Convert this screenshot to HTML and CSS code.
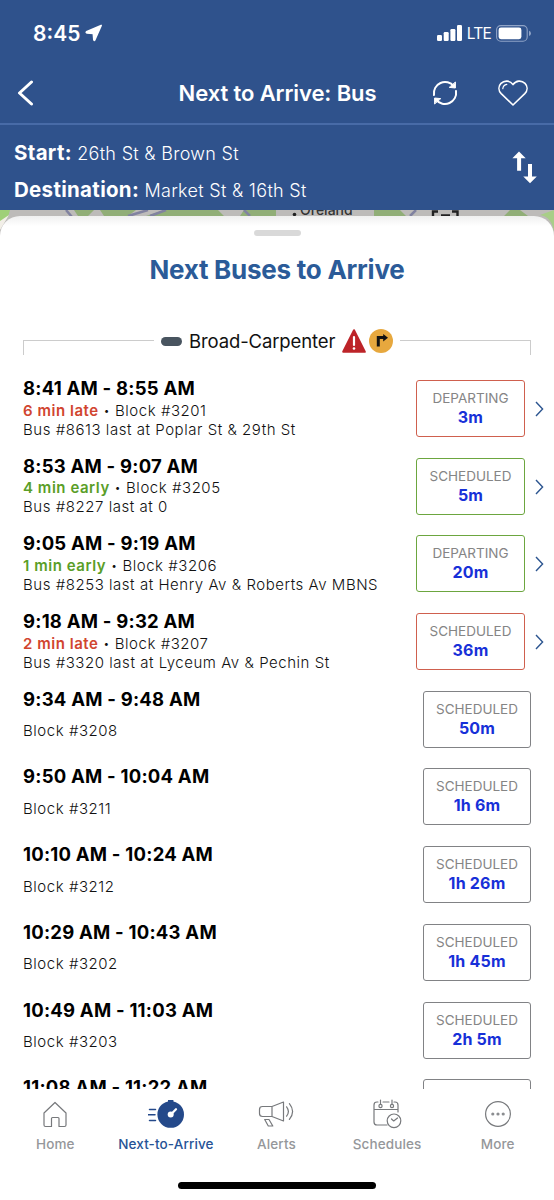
FILE: index.html
```
<!DOCTYPE html>
<html lang="en">
<head>
  <meta charset="UTF-8">
  <meta name="viewport" content="width=device-width, initial-scale=1.0">
  <title>Next to Arrive: Bus</title>
  <link rel="stylesheet" href="styles.css">
</head>
<body>
  <header class="header">
    <div class="status_bar">
      <div class="clock">
        <span>8:45</span>
        <svg width="18" height="18" viewBox="0 0 18 18"><path d="M16.2 1.4 L1.5 7.8 Q.8 8.4 1.7 8.9 L8.3 9.4 L8.8 15.8 Q9.2 16.8 9.8 16 Z" fill="#fff" stroke="#fff" stroke-width="1.6" stroke-linejoin="round"/></svg>
      </div>
      <div class="signal">
        <svg width="25" height="16" viewBox="0 0 25 16" fill="#fff"><rect x="0" y="10" width="5" height="6" rx="1.2"/><rect x="6.7" y="7" width="5" height="9" rx="1.2"/><rect x="13.4" y="4" width="5" height="12" rx="1.2"/><rect x="20" y="0" width="5" height="16" rx="1.2"/></svg>
        <span class="lte">LTE</span>
        <svg width="35" height="17" viewBox="0 0 35 17"><rect x=".6" y=".6" width="30.6" height="15.6" rx="4.2" fill="none" stroke="#8fa3c6" stroke-width="1.1"/><rect x="2.6" y="2.6" width="22.8" height="11.6" rx="2.4" fill="#fff"/><path d="M33 5.8 q2 .9 2 2.6 t-2 2.6z" fill="#8fa3c6"/></svg>
      </div>
    </div>
    <div class="nav_bar">
      <svg class="back" width="17" height="26" viewBox="0 0 17 26"><path d="M14.5 2 L2.5 13 L14.5 24" fill="none" stroke="#fff" stroke-width="3" stroke-linecap="round" stroke-linejoin="round"/></svg>
      <h1>Next to Arrive: Bus</h1>
      <div class="nav_actions">
        <svg width="26" height="26" viewBox="0 0 26 26" fill="none" stroke="#fff" stroke-width="2" stroke-linecap="round" stroke-linejoin="round"><path d="M2 15 A11.2 11.2 0 0 1 21.8 6.2"/><path d="M23.4 2.4 V8 L17.6 7.4 Z" fill="#fff" stroke-width="1"/><path d="M24 11 A11.2 11.2 0 0 1 4.2 19.8"/><path d="M2.6 23.6 V18 L8.4 18.6 Z" fill="#fff" stroke-width="1"/></svg>
        <svg width="30" height="26" viewBox="0 0 30 26" fill="none" stroke="#fff" stroke-width="1.6" stroke-linecap="round" stroke-linejoin="round"><path d="M15 25 L3.2 13.6 C.3 10.5 .2 6.3 3 3.4 C6.5 0 12 .3 15 4.6 C18 .3 23.5 0 27 3.4 C29.8 6.3 29.7 10.5 26.8 13.6 Z"/><path d="M4.8 8.6 Q5.2 5 8.8 4.4" stroke-width="1.2"/></svg>
      </div>
    </div>
    <div class="trip">
      <div class="trip_stops">
        <p><b>Start:</b> <span>26th St &amp; Brown St</span></p>
        <p><b>Destination:</b> <span>Market St &amp; 16th St</span></p>
      </div>
      <svg width="25" height="33" viewBox="0 0 25 33" fill="#fff"><path d="M7 .5 L13.7 7.3 H9.1 V19.8 H5.1 V7.3 H.4 Z"/><path d="M18 32.3 L24.8 25.5 H20 V13 H16 V25.5 H11.3 Z"/></svg>
    </div>
  </header>

  <main class="map">
    <svg class="map_art" width="554" height="40" viewBox="0 0 554 40">
      <rect width="554" height="40" fill="#bdbbb9"/>
      <path d="M0 0 H10 L8 7 L0 12 Z" fill="#9fd078"/>
      <path d="M74 0 H94 L88 6 H78 Z M100 0 H136 L128 6 H104 Z M165 0 H218 L224 6 H146 Z M244 0 H276 V6 H240 Z M374 0 H400 L406 6 H374 Z M510 0 H520 L528 6 H504 Z" fill="#91ae77"/>
      <path d="M66 0 L72 7 M128 6 L148 0 M150 6 L166 0 M244 0 L250 6 M410 6 L416 0" fill="none" stroke="#8182a0" stroke-width="2.5"/>
      <path d="M540 5 Q552 7 554 22 V0 Z" fill="#a8ce88"/>
      <path d="M0 20 L9 5 L0 11 Z" fill="#f2efe8"/>
      <text x="300" y="4.7" class="map_label">Oreland</text>
      <circle cx="294.5" cy="4.5" r="1.8" fill="#222"/>
      <path d="M433 8 V1.5 H438 M452 1.5 H457.5 V8 M441 5.4 H450" fill="none" stroke="#222" stroke-width="2.4"/>
    </svg>
    <section class="sheet">
      <div class="grabber"></div>
      <h2>Next Buses to Arrive</h2>
      <div class="route">
        <span class="line line_left"></span>
        <span class="pill"></span>
        <span class="route_name">Broad-Carpenter</span>
        <svg class="alert" width="24" height="24" viewBox="0 0 24 24"><path d="M12 1.2 L22.8 22.8 H1.2 Z" fill="#bd2429" stroke="#bd2429" stroke-width="2" stroke-linejoin="round"/><path d="M12 8 V16" stroke="#fff" stroke-width="2.2" stroke-linecap="round"/><circle cx="12" cy="19.5" r="1.3" fill="#fff"/></svg>
        <svg class="detour" width="24" height="24" viewBox="0 0 24 24"><circle cx="12" cy="12" r="12" fill="#e7a83e"/><path d="M9.3 17.5 V8.6 H15" fill="none" stroke="#111" stroke-width="3"/><path d="M14.2 5 L19 8.7 L14.2 12.4 Z" fill="#111"/></svg>
        <span class="line line_right"></span>
      </div>

      <ul class="arrivals">
        <li class="late">
          <div class="info"><h3>8:41 AM - 8:55 AM</h3><p><b>6 min late</b> <i>•</i> Block #3201</p><p>Bus #8613 last at Poplar St &amp; 29th St</p></div>
          <div class="box"><span>DEPARTING</span><b>3m</b></div>
          <svg class="more" width="9" height="16" viewBox="0 0 9 16"><path d="M1 1 L7.6 8 L1 15"/></svg>
        </li>
        <li class="early">
          <div class="info"><h3>8:53 AM - 9:07 AM</h3><p><b>4 min early</b> <i>•</i> Block #3205</p><p>Bus #8227 last at 0</p></div>
          <div class="box"><span>SCHEDULED</span><b>5m</b></div>
          <svg class="more" width="9" height="16" viewBox="0 0 9 16"><path d="M1 1 L7.6 8 L1 15"/></svg>
        </li>
        <li class="early">
          <div class="info"><h3>9:05 AM - 9:19 AM</h3><p><b>1 min early</b> <i>•</i> Block #3206</p><p>Bus #8253 last at Henry Av &amp; Roberts Av MBNS</p></div>
          <div class="box"><span>DEPARTING</span><b>20m</b></div>
          <svg class="more" width="9" height="16" viewBox="0 0 9 16"><path d="M1 1 L7.6 8 L1 15"/></svg>
        </li>
        <li class="late">
          <div class="info"><h3>9:18 AM - 9:32 AM</h3><p><b>2 min late</b> <i>•</i> Block #3207</p><p>Bus #3320 last at Lyceum Av &amp; Pechin St</p></div>
          <div class="box"><span>SCHEDULED</span><b>36m</b></div>
          <svg class="more" width="9" height="16" viewBox="0 0 9 16"><path d="M1 1 L7.6 8 L1 15"/></svg>
        </li>
        <li class="planned">
          <div class="info"><h3>9:34 AM - 9:48 AM</h3><p>Block #3208</p></div>
          <div class="box"><span>SCHEDULED</span><b>50m</b></div>
        </li>
        <li class="planned">
          <div class="info"><h3>9:50 AM - 10:04 AM</h3><p>Block #3211</p></div>
          <div class="box"><span>SCHEDULED</span><b>1h 6m</b></div>
        </li>
        <li class="planned">
          <div class="info"><h3>10:10 AM - 10:24 AM</h3><p>Block #3212</p></div>
          <div class="box"><span>SCHEDULED</span><b>1h 26m</b></div>
        </li>
        <li class="planned">
          <div class="info"><h3>10:29 AM - 10:43 AM</h3><p>Block #3202</p></div>
          <div class="box"><span>SCHEDULED</span><b>1h 45m</b></div>
        </li>
        <li class="planned">
          <div class="info"><h3>10:49 AM - 11:03 AM</h3><p>Block #3203</p></div>
          <div class="box"><span>SCHEDULED</span><b>2h 5m</b></div>
        </li>
        <li class="planned">
          <div class="info"><h3>11:08 AM - 11:22 AM</h3></div>
          <div class="box"></div>
        </li>
      </ul>
    </section>
  </main>

  <footer class="footer">
    <nav class="tabs">
      <a class="tab">
        <svg width="28" height="30" viewBox="0 0 28 30"><path d="M3 14 L14 3.5 L25 14 V26 Q25 27.5 23.5 27.5 H18 V19.5 Q18 18.5 17 18.5 H11.5 Q10.5 18.5 10.5 19.5 V27.5 H4.5 Q3 27.5 3 26 Z"/></svg>
        <span>Home</span>
      </a>
      <a class="tab active">
        <svg width="36" height="30" viewBox="0 0 36 30"><circle cx="22.7" cy="15.5" r="13.3" fill="#24498a" stroke="none"/><path d="M20 1 H25.4 V4 H20 Z" fill="#24498a" stroke="none"/><path d="M1.5 10.4 H7.5 M0 15.8 H7 M1.5 21.4 H7.5" stroke="#24498a" stroke-width="1.5"/><circle cx="22.7" cy="15.5" r="3" fill="#fff" stroke="none"/><path d="M23.4 15 L28 10.2" stroke="#fff" stroke-width="2.2"/></svg>
        <span>Next-to-Arrive</span>
      </a>
      <a class="tab">
        <svg width="36" height="30" viewBox="0 0 36 30"><path d="M14 7.5 H4.5 Q1.5 7.5 1.5 10.5 V14.5 Q1.5 17.5 4.5 17.5 H14 Z M14 7.5 L25.5 3 V22 L14 17.5 M6.7 20.5 H11 L14.8 27 H10.3 Z M28.6 7.8 Q32.2 12.5 28.6 17.2 M31.4 4.6 Q37.8 12.5 31.4 20.4"/></svg>
        <span>Alerts</span>
      </a>
      <a class="tab">
        <svg width="30" height="30" viewBox="0 0 30 30"><path d="M15 26 H5 Q2 26 2 23 V6 Q2 3 5 3 H6 M11 3 H17 M22 3 H23 Q26 3 26 6 V13 M2 10.5 H26 M8.5 1 V5 M20 1 V5"/><circle cx="8.5" cy="7" r="1.6"/><circle cx="20" cy="7" r="1.6"/><circle cx="22" cy="21.8" r="6.8"/><path d="M19.5 20 L21.7 22 L25.5 19"/></svg>
        <span>Schedules</span>
      </a>
      <a class="tab">
        <svg width="28" height="30" viewBox="0 0 28 30"><circle cx="14" cy="15" r="12.4"/><g fill="#8b8d90" stroke="none"><circle cx="8.8" cy="15" r="1.6"/><circle cx="14" cy="15" r="1.6"/><circle cx="19.2" cy="15" r="1.6"/></g></svg>
        <span>More</span>
      </a>
    </nav>
    <div class="home_bar"></div>
  </footer>
</body>
</html>
```
FILE: styles.css
```
*{
  box-sizing: border-box;
  margin: 0;
  padding: 0;
}
html,body{
  height: 100%;
}
body{
  display: flex;
  flex-direction: column;
  overflow: hidden;
  background: #fff;
  color: #111;
  font-family: Inter, "Liberation Sans", sans-serif;
}
svg{
  display: block;
  flex: none;
}
.header{
  flex: none;
  height: 210px;
  background: #2f528c;
  color: #fff;
}
.status_bar{
  display: flex;
  align-items: center;
  justify-content: space-between;
  height: 66px;
  padding: 0 23px 0 33px;
}
.clock{
  display: flex;
  align-items: center;
  gap: 5px;
  font-size: 21px;
  font-weight: 600;
}
.signal{
  display: flex;
  align-items: center;
  gap: 5px;
}
.lte{
  font-size: 15.5px;
  letter-spacing: -0.8px;
}
.nav_bar{
  display: flex;
  align-items: center;
  height: 59px;
  padding: 0 26px 3px 17px;
  border-bottom: 2px solid #486ba7;
}
h1{
  flex: 1;
  margin-left: 89px;
  font-size: 22px;
  font-weight: 600;
  letter-spacing: -0.1px;
  text-align: center;
}
.nav_actions{
  display: flex;
  gap: 40px;
}
.trip{
  display: flex;
  align-items: center;
  justify-content: space-between;
  height: 85px;
  padding: 0 17px 0 14px;
}
.trip_stops{
  padding-top: 6px;
}
.trip p{
  height: 37px;
  line-height: 37px;
  font-size: 18px;
  font-weight: 300;
  letter-spacing: 0.3px;
  white-space: nowrap;
}
.trip b{
  font-size: 20.5px;
  font-weight: 700;
}
.map{
  position: relative;
  flex: 1;
  min-height: 0;
  overflow: hidden;
  padding-top: 6px;
}
/* strip of map visible behind the sheet */
.map_art{
  position: absolute;
  top: 0;
  left: 0;
}
.map_label{
  font-size: 14px;
  font-weight: 500;
  fill: #333;
}
.sheet{
  position: relative;
  height: 1000px;
  padding-top: 14px;
  border-radius: 20px 20px 0 0;
  background: linear-gradient(#f0f0f0, #fff 10px);
}
.grabber{
  width: 47px;
  height: 6px;
  margin: 0 auto;
  border-radius: 3px;
  background: #d9d9d9;
}
h2{
  margin-top: 17px;
  line-height: 34px;
  font-size: 26px;
  font-weight: 700;
  letter-spacing: -0.25px;
  text-align: center;
  color: #2b5b98;
}
.route{
  display: flex;
  align-items: center;
  height: 28px;
  margin: 40px 23px 0;
}
.line{
  align-self: flex-end;
  height: 15px;
  border-top: 1px solid #ccc;
}
.line_left{
  flex: none;
  width: 131px;
  border-left: 1px solid #ccc;
}
.line_right{
  flex: 1;
  margin-left: 7px;
  border-right: 1px solid #ccc;
}
.pill{
  flex: none;
  width: 21px;
  height: 9px;
  margin: 0 7px;
  border-radius: 5px;
  background: #48545f;
}
.route_name{
  flex: none;
  width: 146px;
  font-size: 18.5px;
  letter-spacing: -0.12px;
  white-space: nowrap;
}
.alert{
  margin-left: 7px;
}
.detour{
  margin-left: 3px;
}
.arrivals{
  margin-top: 25px;
  padding-left: 23px;
  list-style: none;
}
.arrivals li{
  display: flex;
  height: 77.7px;
}
.info{
  flex: 1;
  white-space: nowrap;
}
.info h3{
  line-height: 16px;
  font-size: 18.5px;
  font-weight: 700;
  letter-spacing: 0.22px;
  color: #000;
}
.info p{
  line-height: 19px;
  font-size: 15px;
  font-weight: 300;
  letter-spacing: 0.54px;
}
.info h3 + p{
  margin-top: 4.6px;
}
.planned h3 + p{
  margin-top: 14.6px;
}
.info b{
  font-weight: 600;
}
.info i{
  font-size: 11px;
  font-style: normal;
  vertical-align: 1px;
  line-height: 1;
}
.late b{
  color: #d1452f;
}
.early b{
  color: #5a9e28;
}
.box{
  display: flex;
  flex-direction: column;
  align-items: center;
  width: 109px;
  height: 57px;
  padding-top: 8px;
  border: 1.5px solid #818285;
  border-radius: 3px;
}
.late .box{
  border-color: #cf604e;
}
.early .box{
  border-color: #6ca63f;
}
.box span{
  line-height: 18px;
  font-size: 13.5px;
  color: #858585;
}
.arrivals .box b{
  line-height: 20px;
  font-size: 16px;
  font-weight: 700;
  letter-spacing: 0.2px;
  color: #1730d8;
}
.planned .box{
  width: 108px;
  margin-right: 23px;
}
.more{
  margin: 21px 10px 0;
  fill: none;
  stroke: #2c5590;
  stroke-width: 1.4;
}
.footer{
  flex: none;
  height: 111px;
  background: #fff;
}
.tabs{
  display: grid;
  grid-template-columns: repeat(5, 1fr);
  padding: 10px 1px 0 0;
}
.tab{
  display: flex;
  flex-direction: column;
  align-items: center;
  gap: 5px;
  font-size: 13.5px;
  font-weight: 500;
  line-height: 20px;
  letter-spacing: 0.12px;
  white-space: nowrap;
  color: #95979a;
}
.tab svg{
  fill: none;
  stroke: #77797c;
  stroke-width: 1.2;
  stroke-linecap: round;
  stroke-linejoin: round;
}
.active{
  color: #265396;
}
.home_bar{
  width: 198px;
  height: 7px;
  margin: 28px auto 0;
  border-radius: 4px;
  background: #000;
}
```
